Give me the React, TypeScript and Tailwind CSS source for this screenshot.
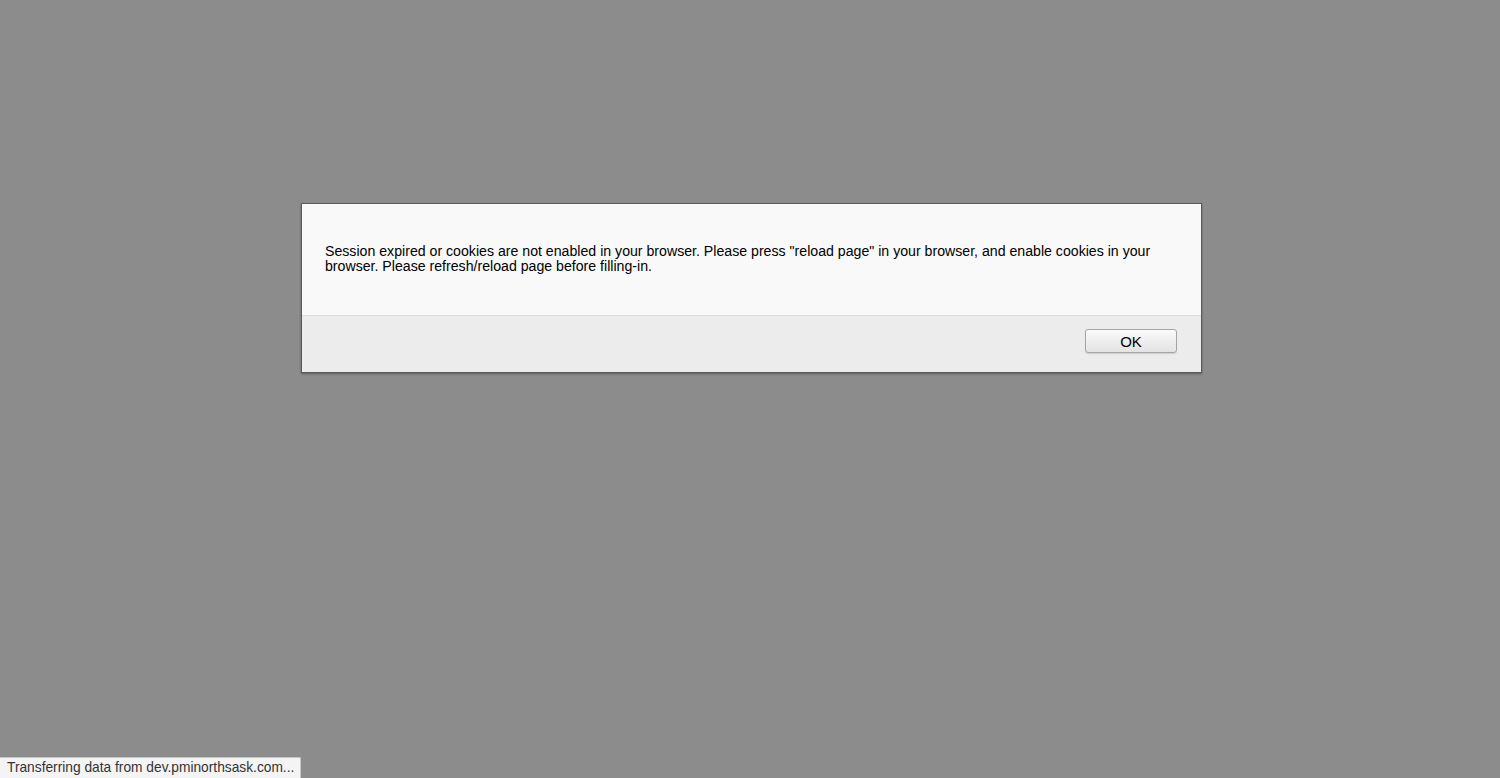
export default function App() {
  return (
    <div
      className="relative h-[778px] w-full overflow-hidden bg-[#8c8c8c]"
      style={{ fontFamily: '"Liberation Sans", Arial, sans-serif' }}
    >
      {/* Dialog */}
      <div className="ml-[301px] pt-[203px]">
        <div className="w-[901px] border border-[#5a5a5a] shadow-[0_1px_2px_rgba(0,0,0,0.35)]">
          <div className="h-[112px] border-b border-[#dcdcdc] bg-[#f9f9f9] px-[23px] pt-[40px]">
            <p className="text-[14.15px] leading-[15px] text-black">
              Session expired or cookies are not enabled in your browser. Please press "reload page" in your browser, and enable cookies in your browser. Please refresh/reload page before filling-in.
            </p>
          </div>
          <div className="flex h-[56px] items-start justify-end bg-[#ececec] pr-[24px] pt-[13px]">
            <button className="h-[24px] w-[92px] rounded-[3px] border border-[#a5a5a5] bg-gradient-to-b from-[#fafafa] to-[#e3e3e3] text-[15px] leading-none text-black shadow-[0_1px_1px_rgba(0,0,0,0.12)]">
              OK
            </button>
          </div>
        </div>
      </div>

      {/* Status bar */}
      <div className="absolute bottom-0 left-0 flex h-[21px] w-[301px] items-center rounded-tr-[2px] border-t border-r border-[#c8c8c8] bg-[#f4f4f4] pl-[7px]">
        <span className="whitespace-nowrap text-[13.75px] text-[#333]">Transferring data from dev.pminorthsask.com...</span>
      </div>
    </div>
  );
}
